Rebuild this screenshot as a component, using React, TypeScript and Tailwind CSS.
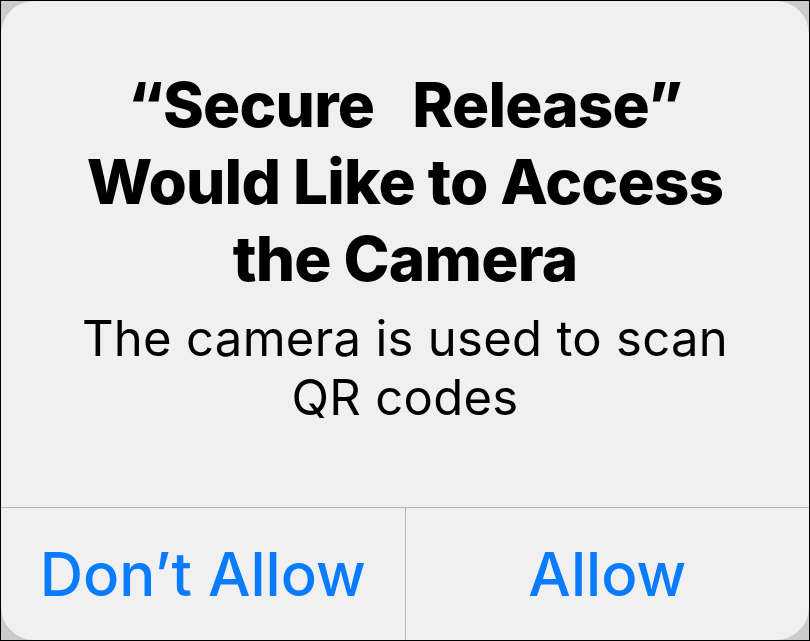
export default function App() {
  return (
    <div className="w-[810px] h-[641px] border border-black bg-[#cbcbcb]">
      <div
        className="flex h-full flex-col overflow-hidden rounded-[33px] bg-[#f0f0f0] text-black"
        style={{ fontFamily: "Inter, 'Liberation Sans', sans-serif" }}
      >
        {/* Message */}
        <div className="flex h-[507px] flex-col items-center border-b border-[#b3b3b3] pt-[65px] text-center">
          <h1 className="text-[62px] font-extrabold leading-[77px] tracking-[-0.8px]">
            <span className="whitespace-pre">{"\u201CSecure   Release\u201D"}</span>
            <br />
            Would Like to Access
            <br />
            the Camera
          </h1>
          <p className="mt-[12px] text-[49px] leading-[59px] tracking-[0.3px]">
            The camera is used to scan
            <br />
            QR codes
          </p>
        </div>

        {/* Actions */}
        <div className="flex flex-1">
          <button className="flex flex-1 items-center justify-center border-r border-[#b3b3b3] text-[60px] font-medium text-[#087bff]">
            Don’t Allow
          </button>
          <button className="flex flex-1 items-center justify-center text-[60px] font-medium text-[#087bff]">
            Allow
          </button>
        </div>
      </div>
    </div>
  );
}
